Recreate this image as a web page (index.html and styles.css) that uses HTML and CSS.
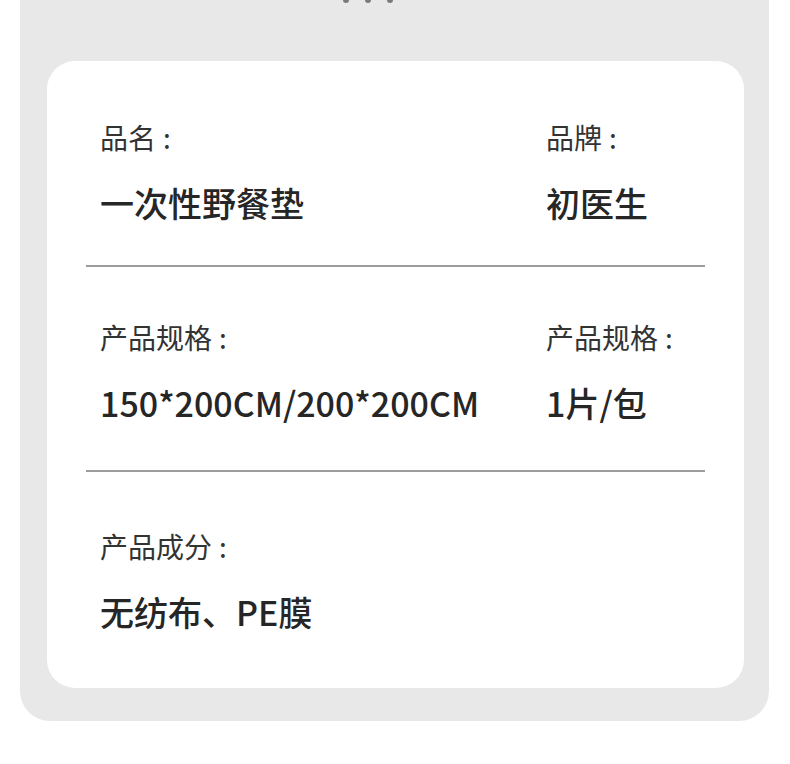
FILE: index.html
```html
<!DOCTYPE html>
<html lang="zh-CN">
<head>
<meta charset="utf-8">
<link rel="stylesheet" href="styles.css">
</head>
<body>
<div class="panel">
  <div class="peek"><span></span><span></span><span></span></div>
  <div class="card">
    <div class="row row-1">
      <div class="cell">
        <div class="label">品名<span class="colon">:</span></div>
        <div class="value">一次性野餐垫</div>
      </div>
      <div class="cell">
        <div class="label">品牌<span class="colon">:</span></div>
        <div class="value">初医生</div>
      </div>
    </div>
    <div class="divider"></div>
    <div class="row row-2">
      <div class="cell">
        <div class="label">产品规格<span class="colon">:</span></div>
        <div class="value">150*200CM/200*200CM</div>
      </div>
      <div class="cell">
        <div class="label">产品规格<span class="colon">:</span></div>
        <div class="value">1片/包</div>
      </div>
    </div>
    <div class="divider"></div>
    <div class="row row-3">
      <div class="cell">
        <div class="label">产品成分<span class="colon">:</span></div>
        <div class="value">无纺布、PE膜</div>
      </div>
    </div>
  </div>
</div>
</body>
</html>
```

FILE: styles.css
```css
html, body {
  margin: 0;
  padding: 0;
  background: #ffffff;
}
body {
  font-family: "Noto Sans CJK SC", "Noto Sans", sans-serif;
  width: 790px;
  height: 764px;
  overflow: hidden;
}
.panel {
  margin: 0 21px 0 20px;
  height: 721px;
  background: #e8e8e8;
  border-radius: 0 0 30px 30px;
  padding: 0 25px 0 27px;
  box-sizing: border-box;
  display: flex;
  flex-direction: column;
}
.peek {
  display: flex;
  justify-content: center;
  gap: 16px;
  height: 61px;
  padding-right: 55px;
}
.peek span {
  width: 6px;
  height: 3px;
  background: #555555;
  border-radius: 0 0 3px 3px;
  opacity: 0.75;
}
.card {
  background: #ffffff;
  border-radius: 28px;
  height: 627px;
  padding: 0 39px;
  box-sizing: border-box;
}
.row {
  display: grid;
  grid-template-columns: 446px 1fr;
  padding: 0 14px;
}
.row-1 { padding-top: 56px; padding-bottom: 42px; }
.row-2 { padding-top: 50px; padding-bottom: 47px; }
.row-3 { padding-top: 54px; padding-bottom: 0; }
.cell {
  display: flex;
  flex-direction: column;
  gap: 26px;
}
.label {
  font-size: 28px;
  line-height: 40px;
  color: #333333;
  white-space: nowrap;
}
.colon {
  margin-left: 7px;
}
.value {
  font-size: 34px;
  line-height: 40px;
  font-weight: 500;
  color: #262626;
  white-space: nowrap;
}
.divider {
  height: 2px;
  background: #9c9c9c;
}
```
